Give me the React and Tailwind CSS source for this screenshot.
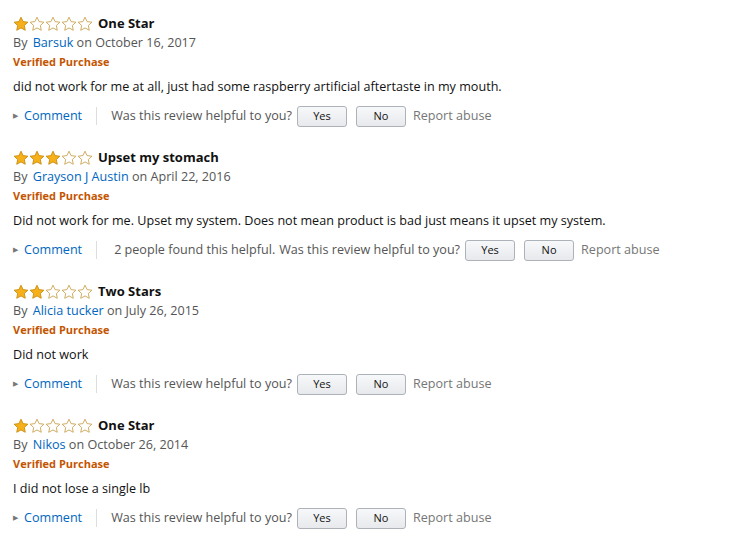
const reviews = [
  { rating: 1, title: 'One Star', author: 'Barsuk', date: 'October 16, 2017', body: 'did not work for me at all, just had some raspberry artificial aftertaste in my mouth.' },
  { rating: 3, title: 'Upset my stomach', author: 'Grayson J Austin', date: 'April 22, 2016', body: 'Did not work for me. Upset my system. Does not mean product is bad just means it upset my system.', helpful: '2 people found this helpful.' },
  { rating: 2, title: 'Two Stars', author: 'Alicia tucker', date: 'July 26, 2015', body: 'Did not work' },
  { rating: 1, title: 'One Star', author: 'Nikos', date: 'October 26, 2014', body: 'I did not lose a single lb' },
];

const Star = ({ filled }) => (
  <svg width="16" height="16" viewBox="0 0 24 24">
    <path
      d="M12 1.8l3.1 6.6 7.2.9-5.3 5 1.4 7.1L12 17.9l-6.4 3.5L7 14.3l-5.3-5 7.2-.9z"
      fill={filled ? '#f5b01a' : 'none'}
      stroke={filled ? '#c98a0c' : '#c9a04a'}
      strokeWidth="1.3"
      strokeLinejoin="round"
    />
  </svg>
);

const Btn = ({ children }) => (
  <button className="h-[21px] w-[50px] rounded-[3px] border border-[#adb1b8] bg-gradient-to-b from-[#f7f8fa] to-[#e7e9ec] text-[11px] text-[#111]">
    {children}
  </button>
);

const Review = ({ r }) => (
  <div className="mb-[18px]">
    <div className="flex h-[20px] items-center pt-px">
      <div className="flex">
        {[1, 2, 3, 4, 5].map((i) => (
          <Star key={i} filled={i <= r.rating} />
        ))}
      </div>
      <span className="ml-[5px] text-[13px] font-bold text-[#111]">{r.title}</span>
    </div>
    <div className="h-[19px] leading-[19px] text-[12.6px] text-[#555]">
      By <span className="ml-[2px] text-[#0066c0]">{r.author}</span> on {r.date}
    </div>
    <div className="h-[19px] leading-[19px] text-[11px] font-bold text-[#c45500]">Verified Purchase</div>
    <div className="mt-[5px] h-[22px] leading-[22px] text-[12.6px] text-[#111]">{r.body}</div>
    <div className="mt-[5px] flex h-[26px] items-center text-[12.6px]">
      <span className="text-[7px] text-[#777]">▶</span>
      <span className="ml-[6px] text-[#0066c0]">Comment</span>
      <span className="mx-[14px] h-[18px] w-px bg-[#ddd]" />
      {r.helpful && <span className="ml-[3px] mr-[4px] text-[#555]">{r.helpful}</span>}
      <span className="text-[#555]">Was this review helpful to you?</span>
      <span className="ml-[5px] flex"><Btn>Yes</Btn></span>
      <span className="ml-[9px] flex"><Btn>No</Btn></span>
      <span className="ml-[7px] text-[#767676]">Report abuse</span>
    </div>
  </div>
);

export default function App() {
  return (
    <div className="min-h-[539px] bg-white pl-[13px] pt-[13px]" style={{ fontFamily: '"Open Sans", Arial, sans-serif' }}>
      {reviews.map((r, i) => (
        <Review key={i} r={r} />
      ))}
    </div>
  );
}
